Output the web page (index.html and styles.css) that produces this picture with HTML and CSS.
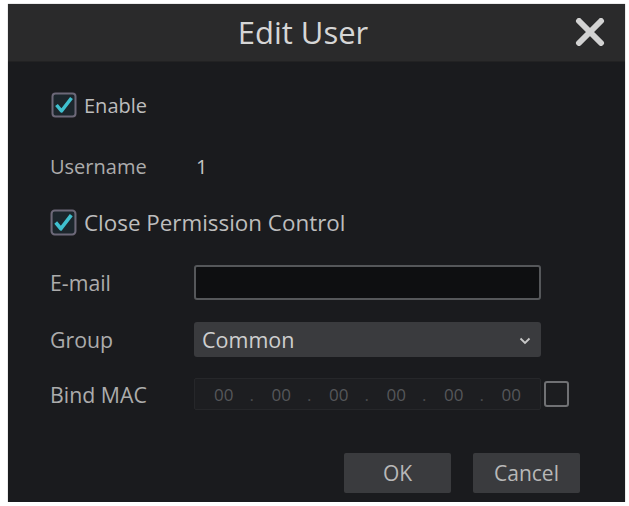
FILE: index.html
```html
<!DOCTYPE html>
<html>
<head>
<meta charset="utf-8">
<link rel="stylesheet" href="styles.css">
</head>
<body>
<div class="dialog">
  <div class="header">
    <div class="title">Edit User</div>
    <div class="close">
      <svg width="30" height="28" viewBox="0 0 30 28"><path d="M4 3 L26 25 M26 3 L4 25" stroke="#d2d2d2" stroke-width="6" stroke-linecap="round" fill="none"/></svg>
    </div>
  </div>
  <div class="body">
    <div class="row row-enable">
      <span class="check">
        <svg width="26" height="26" viewBox="0 0 26 26"><rect x="1.5" y="1.5" width="23" height="23" rx="3" fill="#1c262c" stroke="#6c6878" stroke-width="2"/><path d="M5.5 13 L10.5 19 L20.5 6" stroke="#3fc0cf" stroke-width="3.5" fill="none" stroke-linejoin="round"/></svg>
      </span>
      <span class="check-label">Enable</span>
    </div>
    <div class="row row-user">
      <span class="label">Username</span>
      <span class="value">1</span>
    </div>
    <div class="row row-perm">
      <span class="check check-lg">
        <svg width="27" height="27" viewBox="0 0 26 26"><rect x="1.5" y="1.5" width="23" height="23" rx="3" fill="#1c262c" stroke="#6c6878" stroke-width="2"/><path d="M5.5 13 L10.5 19 L20.5 6" stroke="#3fc0cf" stroke-width="3.5" fill="none" stroke-linejoin="round"/></svg>
      </span>
      <span class="check-label perm-label">Close Permission Control</span>
    </div>
    <div class="row row-email">
      <span class="label label-lg">E-mail</span>
      <div class="input"></div>
    </div>
    <div class="row row-group">
      <span class="label label-lg">Group</span>
      <div class="select">
        <span>Common</span>
        <svg width="12" height="8" viewBox="0 0 12 8"><path d="M1.5 1.5 L6 6 L10.5 1.5" stroke="#c8c8c8" stroke-width="1.8" fill="none"/></svg>
      </div>
    </div>
    <div class="row row-mac">
      <span class="label label-lg">Bind MAC</span>
      <div class="mac">
        <span class="seg">00</span><span class="dot">.</span>
        <span class="seg">00</span><span class="dot">.</span>
        <span class="seg">00</span><span class="dot">.</span>
        <span class="seg">00</span><span class="dot">.</span>
        <span class="seg">00</span><span class="dot">.</span>
        <span class="seg">00</span>
      </div>
      <span class="mac-check"></span>
    </div>
    <div class="buttons">
      <div class="btn">OK</div>
      <div class="btn">Cancel</div>
    </div>
  </div>
</div>
</body>
</html>
```
FILE: styles.css
```css
html, body {
  margin: 0;
  padding: 0;
  background: #ffffff;
}
body {
  font-family: "Open Sans", "DejaVu Sans", sans-serif;
}
.dialog {
  margin: 4px 0 0 8px;
  width: 617px;
  height: 498px;
  background: #1a1b1e;
  display: flex;
  flex-direction: column;
  box-shadow: 0 0 1px #888;
}
.header {
  height: 58px;
  background: #2a2a2b;
  display: flex;
  align-items: center;
  border-bottom: 1px solid #222223;
  box-sizing: border-box;
}
.title {
  flex: 1;
  text-align: center;
  padding-left: 23px;
  color: #d6d6d6;
  font-size: 31px;
  line-height: 40px;
  margin-top: -2px;
}
.close {
  width: 30px;
  height: 28px;
  margin-right: 20px;
  margin-top: -2px;
}
.close svg {
  display: block;
}
.body {
  flex: 1;
  padding: 0 0 0 42px;
  display: flex;
  flex-direction: column;
}
.row {
  display: flex;
  align-items: center;
  font-size: 20px;
  color: #b6b6b6;
}
.row-enable { height: 30px; margin-top: 28px; }
.row-user { height: 30px; margin-top: 31px; }
.row-perm { height: 30px; margin-top: 26px; }
.row-email { height: 35px; margin-top: 28px; }
.row-group { height: 35px; margin-top: 22px; }
.row-mac { height: 32px; margin-top: 21px; }
.check {
  width: 26px;
  height: 26px;
  margin-left: 1px;
  margin-right: 7px;
}
.check-lg {
  width: 27px;
  height: 27px;
  margin-left: 0;
  margin-right: 7px;
}
.check svg { display: block; }
.check-label {
  color: #bdbdbd;
}
.perm-label {
  font-size: 22.4px;
}
.label {
  width: 144px;
  flex-shrink: 0;
  color: #acacac;
}
.label-lg {
  font-size: 21.3px;
}
.value {
  color: #c4c4c4;
  padding-left: 2px;
}
.input {
  width: 347px;
  height: 35px;
  box-sizing: border-box;
  border: 2px solid #55575a;
  border-radius: 3px;
  background: #0e0f11;
}
.select {
  width: 347px;
  height: 35px;
  box-sizing: border-box;
  border-radius: 3px;
  background: #3a3b3e;
  display: flex;
  align-items: center;
  justify-content: space-between;
  padding: 0 10px 0 8px;
  color: #cfcfcf;
  font-size: 21.5px;
}
.select svg { display: block; margin-top: 2px; }
.mac {
  width: 347px;
  height: 32px;
  box-sizing: border-box;
  border: 1px solid #26272a;
  border-radius: 2px;
  background: #1d1e21;
  display: flex;
  align-items: center;
  font-size: 17px;
  color: #55575a;
}
.seg {
  flex: 1;
  text-align: center;
}
.dot {
  width: 0;
  overflow: visible;
  position: relative;
  left: -3px;
  color: #4a4b4e;
}
.mac-check {
  width: 25px;
  height: 26px;
  box-sizing: border-box;
  margin-left: 3px;
  border: 2px solid #707174;
  border-radius: 3px;
  background: #1c1d20;
}
.buttons {
  display: flex;
  justify-content: flex-end;
  gap: 22px;
  margin-top: 43px;
  padding-right: 45px;
}
.btn {
  width: 107px;
  height: 40px;
  background: #3a3b3e;
  border-radius: 2px;
  color: #b8b8b8;
  font-size: 21px;
  display: flex;
  align-items: center;
  justify-content: center;
}
```
